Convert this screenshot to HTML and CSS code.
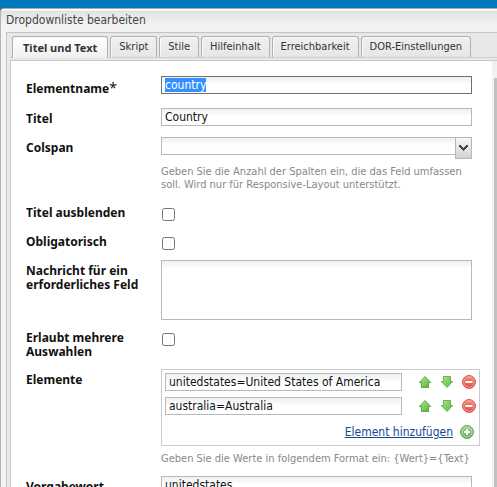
FILE: index.html
```html
<!DOCTYPE html>
<html lang="de">
<head>
<meta charset="utf-8">
<title>Dropdownliste bearbeiten</title>
<link rel="stylesheet" href="styles.css">
</head>
<body>
<svg class="defs" aria-hidden="true">
  <defs>
    <linearGradient id="green" x1="0" y1="0" x2="1" y2="1"><stop offset="0" stop-color="#b4e88a"/><stop offset="1" stop-color="#55b239"/></linearGradient>
    <linearGradient id="red" x1="0" y1="0" x2="0" y2="1"><stop offset="0" stop-color="#f6a092"/><stop offset=".5" stop-color="#ea6255"/><stop offset="1" stop-color="#e5574b"/></linearGradient>
    <linearGradient id="plus" x1="0" y1="0" x2="0" y2="1"><stop offset="0" stop-color="#a6d696"/><stop offset="1" stop-color="#57ae45"/></linearGradient>
    <symbol id="up" viewBox="0 0 14 14"><path d="M7 1.5 12.7 7.5H10.5V12.5H3.5V7.5H1.3Z" fill="url(#green)" stroke="#5aa549"/></symbol>
    <symbol id="down" viewBox="0 0 14 14"><path d="M7 12.5 12.7 6.5H10.5V1.5H3.5V6.5H1.3Z" fill="url(#green)" stroke="#66b551"/></symbol>
    <symbol id="remove" viewBox="0 0 14 14"><circle cx="7" cy="7" r="6.4" fill="url(#red)" stroke="#cf4b42"/><circle cx="7" cy="7" r="5.3" fill="none" stroke="#f7b1a8" stroke-width=".7"/><path d="M3.5 6h7v2h-7z" fill="#fff"/></symbol>
    <symbol id="add" viewBox="0 0 14 14"><circle cx="7" cy="7" r="6.4" fill="url(#plus)" stroke="#56984c"/><circle cx="7" cy="7" r="5.1" fill="none" stroke="#c6e6bc" stroke-width=".8"/><path d="M6 4h2v2h2v2H8v2H6V8H4V6h2z" fill="#fff"/></symbol>
  </defs>
</svg>
<main class="dialog">
  <h1 class="dialog-title">Dropdownliste bearbeiten</h1>
  <div class="frame">
    <div class="tabs" role="tablist">
      <button class="tab active" role="tab" aria-selected="true">Titel und Text</button>
      <button class="tab" role="tab">Skript</button>
      <button class="tab" role="tab">Stile</button>
      <button class="tab" role="tab">Hilfeinhalt</button>
      <button class="tab" role="tab">Erreichbarkeit</button>
      <button class="tab" role="tab">DOR-Einstellungen</button>
    </div>
    <div class="panel">
      <form class="form">
        <div class="row first">
          <label for="name">Elementname<span class="required">*</span></label>
          <div class="field"><input class="text" id="name" type="text" value="country" autofocus></div>
        </div>
        <div class="row">
          <label for="title">Titel</label>
          <div class="field"><input class="text" id="title" type="text" value="Country"></div>
        </div>
        <div class="row">
          <label for="colspan">Colspan</label>
          <div class="field">
            <div class="combo">
              <select class="text" id="colspan"><option></option></select>
              <span class="arrow"><svg width="9" height="6" viewBox="0 0 9 6" shape-rendering="crispEdges"><path d="M0 0h2v1h1v1h1v1h1V2h1V1h1V0h2v2H8v1H7v1H6v1H5v1H4V5H3V4H2V3H1V2H0z" fill="#444"/></svg></span>
            </div>
            <p class="help combo-help">Geben Sie die Anzahl der Spalten ein, die das Feld umfassen soll. Wird nur für Responsive-Layout unterstützt.</p>
          </div>
        </div>
        <div class="row toggle">
          <label for="hide">Titel ausblenden</label>
          <div class="field"><input class="check" id="hide" type="checkbox"></div>
        </div>
        <div class="row toggle">
          <label for="mandatory">Obligatorisch</label>
          <div class="field"><input class="check" id="mandatory" type="checkbox"></div>
        </div>
        <div class="row message">
          <label for="message">Nachricht für ein erforderliches Feld</label>
          <div class="field"><textarea class="text area" id="message"></textarea></div>
        </div>
        <div class="row toggle">
          <label for="multi">Erlaubt mehrere Auswahlen</label>
          <div class="field"><input class="check" id="multi" type="checkbox"></div>
        </div>
        <div class="row">
          <label for="item1">Elemente</label>
          <div class="field">
            <div class="items">
              <div class="item">
                <input class="text" id="item1" type="text" value="unitedstates=United States of America">
                <button class="icon" type="button" aria-label="Nach oben"><svg><use href="#up"/></svg></button>
                <button class="icon" type="button" aria-label="Nach unten"><svg><use href="#down"/></svg></button>
                <button class="icon" type="button" aria-label="Entfernen"><svg><use href="#remove"/></svg></button>
              </div>
              <div class="item">
                <input class="text" type="text" aria-label="Element 2" value="australia=Australia">
                <button class="icon" type="button" aria-label="Nach oben"><svg><use href="#up"/></svg></button>
                <button class="icon" type="button" aria-label="Nach unten"><svg><use href="#down"/></svg></button>
                <button class="icon" type="button" aria-label="Entfernen"><svg><use href="#remove"/></svg></button>
              </div>
              <div class="item-add">
                <a href="#add-item">Element hinzufügen</a>
                <button class="icon" type="button" aria-label="Hinzufügen"><svg><use href="#add"/></svg></button>
              </div>
            </div>
            <p class="help">Geben Sie die Werte in folgendem Format ein: {Wert}={Text}</p>
          </div>
        </div>
        <div class="row">
          <label for="default">Vorgabewort</label>
          <div class="field"><input class="text" id="default" type="text" value="unitedstates"></div>
        </div>
      </form>
      <div class="scrollbar"><div class="thumb"></div></div>
    </div>
  </div>
</main>
<script src="app.js"></script>
</body>
</html>
```
FILE: styles.css
```css
* { box-sizing: border-box; }

body {
  display: flex;
  height: 100vh;
  margin: 0;
  padding-top: 8px;
  overflow: hidden;
  background: #0079c1;
  color: #111;
  font: 12px/14px "DejaVu Sans Condensed", "Open Sans", sans-serif;
}

button, input, select, textarea { font: inherit; color: inherit; }

.defs { position: absolute; width: 0; height: 0; }

.dialog {
  display: flex;
  flex: 1;
  flex-direction: column;
  min-width: 0;
  padding-left: 5px;
  border-top: 1px solid #aaa;
  border-left: 1px solid #b4b4b4;
  border-top-left-radius: 4px;
  background: linear-gradient(#fff 0 1px, #e2e2e2 2px, #f3f3f3 16px);
}

.dialog-title {
  margin: 0;
  height: 23px;
  color: #444;
  font-size: 12px;
  font-weight: 400;
  line-height: 23px;
}

.frame {
  display: flex;
  flex: 1;
  flex-direction: column;
  min-height: 0;
  padding: 3px 0 0 3px;
  border-top: 1px solid #c4c4c4;
  border-left: 1px solid #c4c4c4;
  background: #e8e8e8;
}

.tabs {
  display: flex;
  gap: 2px;
  height: 22px;
  padding-left: 2px;
  border-bottom: 1px solid #ccc;
}

.tab {
  height: 21px;
  padding: 0 8px;
  border: 1px solid #b0b0b0;
  border-bottom: 0;
  border-radius: 3px 3px 0 0;
  background: linear-gradient(#f0f0f0, #e6e6e6);
  box-shadow: inset 1px 1px #fafafa;
  color: #333;
  font-size: 11px;
  line-height: 20px;
  white-space: nowrap;
}

.tab.active {
  height: 22px;
  padding: 0 10px;
  background: linear-gradient(#fff, #f0f0f0);
  font-family: "Noto Sans", sans-serif;
  font-weight: 700;
}

.panel {
  display: flex;
  flex: 1;
  min-height: 0;
  margin-top: 2px;
  border-top: 1px solid #c8c8c8;
  border-left: 1px solid #c8c8c8;
  background: #fff;
}

.form {
  flex: 1;
  min-width: 0;
  padding: 15px 12px 0 15px;
  overflow: hidden;
}

.row {
  display: grid;
  grid-template-columns: 135px 1fr;
  padding-bottom: 11px;
}

.row.first { padding-bottom: 12px; }
.row.toggle { padding-bottom: 10px; }
.row.message { padding-bottom: 7px; }

label {
  padding: 4px 14px 0 0;
  font-family: "Noto Sans", sans-serif;
  font-size: 12px;
  font-weight: 700;
}

.first label { padding-top: 6px; }

.required { font-size: 14px; font-weight: 400; line-height: 1px; }

.text {
  display: block;
  flex: 1;
  width: calc(100% - 8px);
  min-width: 0;
  height: 18px;
  margin: 0;
  padding: 0 3px;
  border: 1px solid #b9b9b9;
  border-radius: 0;
  outline: 0;
  appearance: none;
  background: linear-gradient(#edf1f1, #fff 8px);
}

.text:focus { border-color: #707070; }
.text::selection { background: #3390ff; color: #fff; }
.area { height: 60px; resize: none; }

.combo {
  position: relative;
  width: calc(100% - 8px);
}

.combo .text { width: 100%; }

.arrow {
  position: absolute;
  top: 0;
  right: 0;
  display: grid;
  place-items: center;
  width: 17px;
  height: 22px;
  border: 1px solid #b5b5bd;
  background: linear-gradient(#f8f8f8, #d2d2d2);
  pointer-events: none;
}

.check {
  display: block;
  width: 13px;
  height: 13px;
  margin: 6px 0 0 1px;
}

.help {
  margin: 6px 8px 0 0;
  color: #888;
  font-size: 11px;
  line-height: 13px;
}

.combo-help { margin-top: 10px; }

.items {
  display: grid;
  gap: 6px;
  padding: 3px;
  border: 1px solid #ccc;
}

.item {
  display: flex;
  align-items: center;
  gap: 8px;
}

.item .text { margin-right: 8px; }

.icon {
  display: block;
  width: 14px;
  height: 14px;
  padding: 0;
  border: 0;
  background: none;
}

.icon svg {
  display: block;
  width: 14px;
  height: 14px;
}

.item-add {
  display: flex;
  align-items: center;
  justify-content: flex-end;
  gap: 7px;
  height: 21px;
  padding-right: 2px;
}

a { color: #1b4690; }

.scrollbar {
  width: 5px;
  padding: 17px 0 0 2px;
  background: #f1f1f1;
}

.thumb { height: 100%; background: #c1c1c1; }
```
FILE: app.js
```js
const nameField = document.getElementById("name");
nameField.focus();
nameField.select();
```
